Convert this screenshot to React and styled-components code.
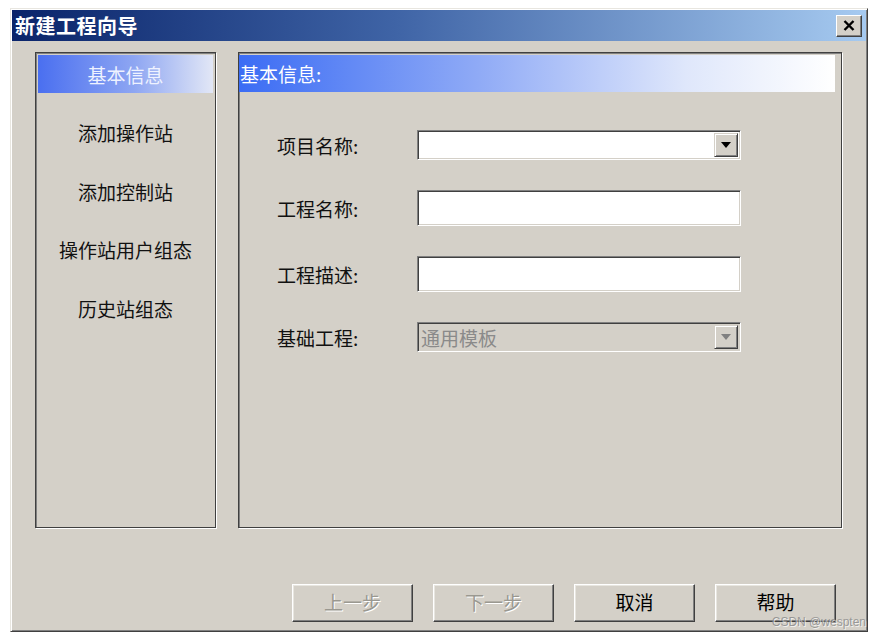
import React from 'react';
import styled, { createGlobalStyle } from 'styled-components';

const GlobalStyle = createGlobalStyle`
  body {
    margin: 0;
    padding: 0;
    background: #ffffff;
    font-family: "Noto Sans CJK SC", "Liberation Sans", sans-serif;
  }
`;

const Window = styled.div`
  position: relative;
  box-sizing: border-box;
  width: 858px;
  height: 624px;
  margin: 8px 0 0 10px;
  background: #d4d0c8;
  border: 1px solid;
  border-color: #e8e6e0 #404040 #404040 #e8e6e0;
  box-shadow: inset 1px 1px 0 #ffffff, inset -1px -1px 0 #808080;
  display: flex;
  flex-direction: column;
  padding: 1px;
`;

const TitleBar = styled.div`
  height: 31px;
  display: flex;
  align-items: center;
  justify-content: space-between;
  padding: 0 4px 0 3px;
  background: linear-gradient(to right, #0a246a 0%, #3f64a6 45%, #a6caf0 100%);
`;

const Title = styled.span`
  color: #ffffff;
  font-size: 20px;
  font-weight: 700;
  letter-spacing: 0.5px;
`;

const CloseButton = styled.div`
  box-sizing: border-box;
  width: 26px;
  height: 22px;
  background: #d4d0c8;
  border: 1px solid;
  border-color: #ffffff #404040 #404040 #ffffff;
  box-shadow: inset -1px -1px 0 #808080;
  display: flex;
  align-items: center;
  justify-content: center;
`;

const Panels = styled.div`
  display: grid;
  grid-template-columns: 181px 604px;
  column-gap: 22px;
  height: 476px;
  margin: 11px 0 0 23px;
`;

const Panel = styled.div`
  box-sizing: border-box;
  border: 1px solid #404040;
  box-shadow: inset 1px 1px 0 #808080, 1px 1px 0 #ffffff;
  display: flex;
  flex-direction: column;
`;

const NavList = styled.div`
  display: flex;
  flex-direction: column;
  gap: 20.5px;
  margin: 2px 2px 0;
`;

const NavItem = styled.div`
  height: 38px;
  display: flex;
  align-items: center;
  justify-content: center;
  font-size: 19px;
  color: ${p => (p.$active ? '#eef2ff' : '#111111')};
  background: ${p =>
    p.$active ? 'linear-gradient(to right, #4a6ff0 0%, #8ea6f2 55%, #e2e7f6 100%)' : 'transparent'};
`;

const Header = styled.div`
  height: 37px;
  margin: 2px 6px 0 0;
  display: flex;
  align-items: center;
  padding-left: 1px;
  font-size: 19px;
  color: #ffffff;
  background: linear-gradient(to right, #3b6cf4 0%, #8faaf6 40%, #dfe7fb 75%, #ffffff 100%);
`;

const Form = styled.div`
  display: grid;
  grid-template-columns: 140px 324px;
  row-gap: 30px;
  align-items: center;
  margin: 38px 0 0 38px;
`;

const Label = styled.div`
  font-size: 19px;
  color: #111111;
`;

const Field = styled.div`
  box-sizing: border-box;
  height: ${p => p.$h}px;
  background: ${p => (p.$disabled ? '#d4d0c8' : '#ffffff')};
  border: 1px solid;
  border-color: #808080 #ffffff #ffffff #808080;
  box-shadow: inset 1px 1px 0 #404040, inset -1px -1px 0 #d4d0c8;
  display: flex;
  align-items: center;
  padding: 2px 2px 2px 3px;
  font-size: 19px;
  color: #8a8a8a;
`;

const FieldText = styled.span`
  flex: 1;
`;

const ArrowButton = styled.div`
  box-sizing: border-box;
  width: 24px;
  height: 100%;
  background: #d4d0c8;
  border: 1px solid;
  border-color: #d4d0c8 #404040 #404040 #d4d0c8;
  box-shadow: inset 1px 1px 0 #ffffff, inset -1px -1px 0 #808080;
  display: flex;
  align-items: center;
  justify-content: center;
`;

const Triangle = styled.div`
  width: 0;
  height: 0;
  border-left: 5px solid transparent;
  border-right: 5px solid transparent;
  border-top: 6px solid ${p => (p.$disabled ? '#808080' : '#000000')};
`;

const ButtonRow = styled.div`
  display: flex;
  justify-content: flex-end;
  gap: 20px;
  margin: 56px 30px 0 0;
`;

const Button = styled.div`
  box-sizing: border-box;
  width: 121px;
  height: 38px;
  padding-bottom: 2px;
  background: #d4d0c8;
  border: 1px solid;
  border-color: #ffffff #404040 #404040 #ffffff;
  box-shadow: inset -1px -1px 0 #808080, inset 1px 1px 0 #e8e6e0;
  display: flex;
  align-items: center;
  justify-content: center;
  font-size: 19px;
  line-height: 22px;
  color: ${p => (p.$disabled ? '#9a9890' : '#000000')};
  text-shadow: ${p => (p.$disabled ? '1px 1px 0 #ffffff' : 'none')};
`;

const Watermark = styled.div`
  position: absolute;
  right: 1px;
  bottom: 3px;
  font-family: "Liberation Sans", sans-serif;
  font-size: 12px;
  line-height: 12px;
  color: rgba(140, 140, 140, 0.85);
  text-shadow: 1px 1px 0 rgba(255, 255, 255, 0.7);
`;

const navItems = ['基本信息', '添加操作站', '添加控制站', '操作站用户组态', '历史站组态'];

export default function App() {
  return (
    <Window>
      <GlobalStyle />
      <TitleBar>
        <Title>新建工程向导</Title>
        <CloseButton>
          <svg width="12" height="11" viewBox="0 0 12 11">
            <path d="M1.5 1 L10.5 10 M10.5 1 L1.5 10" stroke="#000" strokeWidth="2.4" />
          </svg>
        </CloseButton>
      </TitleBar>

      <Panels>
        <Panel>
          <NavList>
            {navItems.map((item, i) => (
              <NavItem key={item} $active={i === 0}>{item}</NavItem>
            ))}
          </NavList>
        </Panel>

        <Panel>
          <Header>基本信息:</Header>
          <Form>
            <Label>项目名称:</Label>
            <Field $h={30}>
              <FieldText />
              <ArrowButton><Triangle /></ArrowButton>
            </Field>

            <Label>工程名称:</Label>
            <Field $h={36} />

            <Label>工程描述:</Label>
            <Field $h={36} />

            <Label>基础工程:</Label>
            <Field $h={30} $disabled>
              <FieldText>通用模板</FieldText>
              <ArrowButton><Triangle $disabled /></ArrowButton>
            </Field>
          </Form>
        </Panel>
      </Panels>

      <ButtonRow>
        <Button $disabled>上一步</Button>
        <Button $disabled>下一步</Button>
        <Button>取消</Button>
        <Button>帮助</Button>
      </ButtonRow>

      <Watermark>CSDN @wespten</Watermark>
    </Window>
  );
}
